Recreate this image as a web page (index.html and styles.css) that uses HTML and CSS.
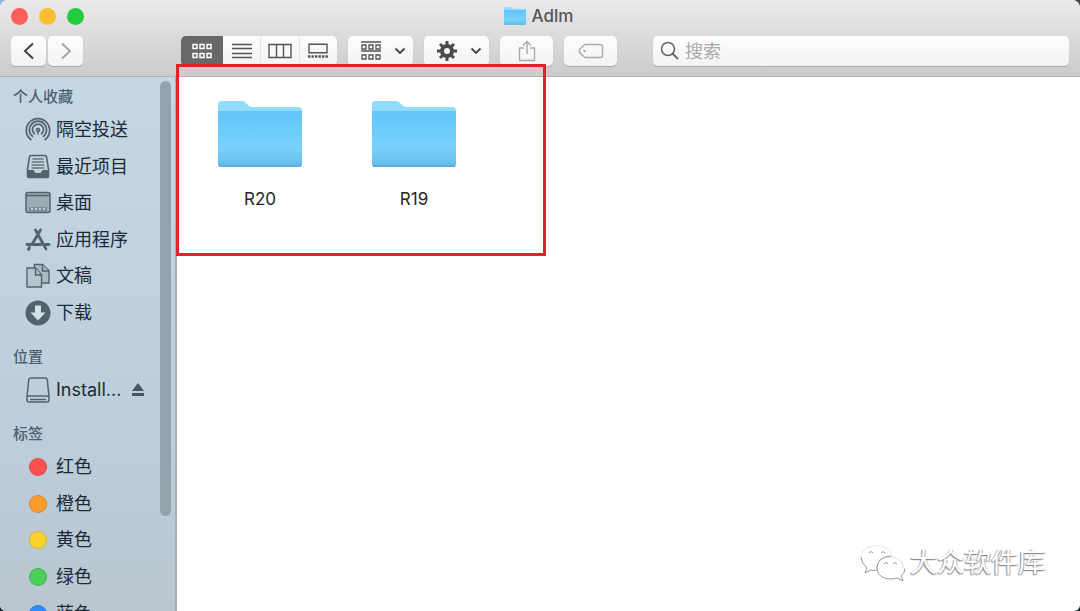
FILE: index.html
```html
<!DOCTYPE html>
<html lang="zh-CN">
<head>
<meta charset="utf-8">
<title>Adlm</title>
<link rel="stylesheet" href="styles.css">
</head>
<body>
<svg class="defs" aria-hidden="true">
  <defs>
    <linearGradient id="front" x1="0" y1="0" x2="0" y2="1">
      <stop offset="0" stop-color="#61c5f8"/>
      <stop offset="0.65" stop-color="#78d2fb"/>
      <stop offset="0.88" stop-color="#6cc5f1"/>
      <stop offset="1" stop-color="#5cb3e2"/>
    </linearGradient>
    <symbol id="folder" viewBox="0 0 84 68">
      <path d="M0 5Q0 1 4 1H24Q27 1 29 4Q31 7 34 7H80Q84 7 84 11V20H0Z" fill="#8fdcfc"/>
      <path d="M0 11H84V64Q84 67 81 67H3Q0 67 0 64Z" fill="url(#front)"/>
      <path d="M1 66.5H83" stroke="#5aa9d2" stroke-width="1"/>
    </symbol>
  </defs>
</svg>
<div class="window">
  <header class="header">
    <div class="titlebar">
      <div class="lights">
        <button class="light close" aria-label="关闭"></button>
        <button class="light minimize" aria-label="最小化"></button>
        <button class="light expand" aria-label="缩放"></button>
      </div>
      <h1 class="title"><svg class="title-icon" viewBox="0 0 84 68" preserveAspectRatio="none" aria-hidden="true"><use href="#folder"/></svg>Adlm</h1>
    </div>
    <div class="toolbar">
      <div class="nav">
        <button class="tool" aria-label="后退"><svg width="12" height="18" viewBox="0 0 12 18"><path d="M10 1.500L2 9l8 7.500" stroke="#444" stroke-width="2"/></svg></button>
        <button class="tool" aria-label="前进"><svg width="12" height="18" viewBox="0 0 12 18"><path d="M2 1.500L10 9l-8 7.500" stroke="#a5a5a5" stroke-width="2"/></svg></button>
      </div>
      <div class="views">
        <button class="view active" aria-label="图标"><svg width="22" height="16" viewBox="0 0 22 16" stroke="#fff" stroke-width="1.500"><path d="M2 1.500h4v4H2zM9 1.500h4v4H9zM16 1.500h4v4h-4zM2 10.500h4v4H2zM9 10.500h4v4H9zM16 10.500h4v4h-4z"/></svg></button>
        <button class="view" aria-label="列表"><svg width="20" height="16" viewBox="0 0 20 16"><path d="M0 1.500h20M0 5.500h20M0 10.500h20M0 14.500h20" stroke="#555" stroke-width="1.300"/></svg></button>
        <button class="view" aria-label="分栏"><svg width="24" height="16" viewBox="0 0 24 16"><path d="M1 1.500h22v13H1zM8.500 1.500v13M15.500 1.500v13" stroke="#555" stroke-width="1.400"/></svg></button>
        <button class="view" aria-label="画廊"><svg width="22" height="16" viewBox="0 0 22 16"><path d="M2 1.200h18v8.500H2z" stroke="#555" stroke-width="1.400"/><path d="M1 13.500h20" stroke="#555" stroke-width="2.600" stroke-dasharray="2.400 1.100"/></svg></button>
      </div>
      <button class="tool wide" aria-label="分组">
        <svg width="22" height="20" viewBox="0 0 22 20"><path d="M1 1h20M1 10h20M2 4h4v4H2zM9 4h4v4H9zM16 4h4v4h-4zM2 14h4v4H2zM9 14h4v4H9zM16 14h4v4h-4z" stroke="#555" stroke-width="1.300"/></svg>
        <svg width="12" height="8" viewBox="0 0 12 8"><path d="M1.500 1.500L6 6l4.500-4.500" stroke="#444" stroke-width="1.800"/></svg>
      </button>
      <button class="tool wide" aria-label="操作">
        <svg width="22" height="22" viewBox="-11 -11 22 22"><g stroke="#4b4b4b" stroke-width="3"><path d="M0-10V-5M0 10V5M-10 0H-5M10 0H5M-7-7L-4-4M7 7L4 4M-7 7L-4 4M7-7L4-4"/><circle r="5" stroke-width="4"/></g></svg>
        <svg width="12" height="8" viewBox="0 0 12 8"><path d="M1.500 1.500L6 6l4.500-4.500" stroke="#444" stroke-width="1.800"/></svg>
      </button>
      <button class="tool single" aria-label="共享"><svg width="18" height="22" viewBox="0 0 18 22"><path d="M6 8H1.500v12.500h15V8H12M9 14V1.500M5 5.500l4-4 4 4" stroke="#aaa" stroke-width="1.400"/></svg></button>
      <button class="tool single" aria-label="标签"><svg width="26" height="16" viewBox="0 0 26 16"><path d="M7 1.500h15.500q2 0 2 2v9q0 2-2 2H7L2 10Q.500 8 2 6Z" stroke="#aaa" stroke-width="1.400"/><circle cx="6.500" cy="8" r="1.200" fill="#aaa"/></svg></button>
      <label class="search">
        <svg width="20" height="20" viewBox="0 0 20 20"><circle cx="8" cy="8" r="6.500" stroke="#666" stroke-width="1.500"/><path d="M12.500 12.500l5.500 5.500" stroke="#666" stroke-width="1.800"/></svg>
        <input type="search" placeholder="搜索" aria-label="搜索">
      </label>
    </div>
  </header>
  <div class="body">
    <nav class="sidebar" aria-label="边栏">
      <section>
        <h2>个人收藏</h2>
        <ul class="favorites">
          <li><a href="#airdrop"><svg class="icon" viewBox="0 0 26 26" stroke="#53636e" stroke-width="1.700"><path d="M6.500 23A11.700 11.700 0 1 1 19.500 23M8 19.800A8.600 8.600 0 1 1 18 19.800M10 17.200A5.500 5.500 0 1 1 16 17.200"/><circle cx="13" cy="13" r="1.500"/><path d="M13 15v3" stroke-width="1.200"/></svg>隔空投送</a></li>
          <li><a href="#recents"><svg class="icon" viewBox="0 0 26 26"><path d="M6 1.500h14q1.300 0 1.500 1.300L23.500 15v7q0 1.500-1.500 1.500H4q-1.500 0-1.500-1.500v-7L4.500 2.800Q4.700 1.500 6 1.500Z" fill="#c3d1db" stroke="#53636e" stroke-width="1.600"/><path d="M2.500 16H8q1 0 1.500 1.500T11 19h4q1 0 1.500-1.500T18 16h5.500v6q0 2-2 2h-17q-2 0-2-2Z" fill="#53636e"/><path d="M7.500 5h11M7 8h12M6.500 11h13M6.500 14h13" stroke="#6a7983" stroke-width="1.300"/></svg>最近项目</a></li>
          <li><a href="#desktop"><svg class="icon" viewBox="0 0 26 26"><rect x="1" y="2.500" width="24" height="20" rx="2" fill="#9dabb5" stroke="#53636e" stroke-width="1.500"/><path d="M1 5.500h24" stroke="#53636e" stroke-width="1.300"/><path d="M4 17h18v5H4z" fill="#7d8c96"/><path d="M6 19h14" stroke="#c3d0d9" stroke-width="2" stroke-dasharray="2 2"/></svg>桌面</a></li>
          <li><a href="#applications"><svg class="icon" viewBox="0 0 26 26" stroke="#53636e" stroke-width="2.800" stroke-linecap="round"><path d="M10.500 3l10.500 19M15.500 3L7.500 16.500M4.500 20.500l-1 2M2 17.500h14M21 17.500h3"/></svg>应用程序</a></li>
          <li><a href="#documents"><svg class="icon" viewBox="0 0 26 26"><g fill="#aab8c2" stroke="#53636e" stroke-width="1.400"><path d="M9.500 1.500h8l6.500 6V20H9.500Z"/><path d="M17.500 1.500V8H24"/><path d="M2 5h8.500l6 6.500V24H2Z" fill="#b7c5cf"/><path d="M10.500 5v7h6"/></g></svg>文稿</a></li>
          <li><a href="#downloads"><svg class="icon" viewBox="0 0 26 26"><circle cx="13" cy="13" r="12.500" fill="#53636e"/><path d="M10 5.500h6v7h4.500L13 20.500 5.500 12.500H10Z" fill="#d3e0e9"/></svg>下载</a></li>
        </ul>
      </section>
      <section>
        <h2>位置</h2>
        <ul>
          <li><a href="#install"><svg class="icon" viewBox="0 0 26 26" stroke="#53636e" stroke-width="1.500"><path d="M6 1h14q2 0 2.300 2L24 19.500V23q0 2-2 2H4q-2 0-2-2V19.500L3.700 3Q4 1 6 1ZM2 20q1-1 2-1h18q1 0 2 1"/><path d="M5 22.500h16"/></svg>Install...</a><button class="eject" aria-label="推出"><svg width="12" height="14" viewBox="0 0 12 14"><path d="M6 0l6 8H0zM0 10h12v3H0z" fill="#465661"/></svg></button></li>
        </ul>
      </section>
      <section>
        <h2>标签</h2>
        <ul class="tags">
          <li><a href="#red"><span class="dot red"></span>红色</a></li>
          <li><a href="#orange"><span class="dot orange"></span>橙色</a></li>
          <li><a href="#yellow"><span class="dot yellow"></span>黄色</a></li>
          <li><a href="#green"><span class="dot green"></span>绿色</a></li>
          <li><a href="#blue"><span class="dot blue"></span>蓝色</a></li>
        </ul>
      </section>
      <div class="scrollbar"></div>
    </nav>
    <main class="files">
      <a class="file" href="#r20"><svg class="file-icon" viewBox="0 0 84 68" aria-hidden="true"><use href="#folder"/></svg>R20</a>
      <a class="file" href="#r19"><svg class="file-icon" viewBox="0 0 84 68" aria-hidden="true"><use href="#folder"/></svg>R19</a>
    </main>
  </div>
  <div class="highlight"></div>
  <div class="watermark">
    <svg width="46" height="40" viewBox="0 0 46 40" stroke-width="1"><path d="M33 13C31-1 3-1 2 14" stroke="#e6e6e6"/><path d="M2 14q0 6 6 11l-2 5 6-3q5 1 7 0" stroke="#999"/><path d="M18 25C18 10 44 10 44 25" stroke="#ddd"/><path d="M32 13Q18 14 18 25C18 34 28 38 38 35l6 3-2-5q4-3 4-8" stroke="#999"/><path d="M10 10q2-3 4 0M22 10q2-3 4 0M25 21q2-3 4 0M34 21q2-3 4 0" stroke="#999"/></svg>
    <span>大众软件库</span>
  </div>
</div>
</body>
</html>
```
FILE: styles.css
```css
* { box-sizing: border-box; }
body {
  margin: 0;
  height: 100vh;
  overflow: hidden;
  background: linear-gradient(90deg, #8db6dc, #444 30%) top / 100% 50% no-repeat, #14242a;
  font-family: Inter, "Noto Sans CJK SC", sans-serif;
  color: #1b2b36;
}
svg { fill: none; flex: none; display: block; }
button { border: 0; padding: 0; margin: 0; font: inherit; background: none; }
a { color: inherit; text-decoration: none; }
h1, h2, ul { margin: 0; padding: 0; list-style: none; }
.defs { position: absolute; width: 0; height: 0; }
.window {
  position: relative;
  display: flex;
  flex-direction: column;
  height: 100%;
  overflow: hidden;
  border-radius: 8px 8px 6px 6px;
  background: #fff;
}
.header {
  flex: none;
  padding-bottom: 10px;
  background: linear-gradient(#eaeaea, #cbcbcb);
  border-bottom: 1px solid #b2b2b2;
}
.titlebar {
  display: grid;
  grid-template-columns: 1fr auto 1fr;
  align-items: center;
  height: 32px;
  padding: 0 14px 0 11px;
}
.lights { display: flex; gap: 11px; }
.light { width: 17px; height: 17px; border-radius: 50%; }
.close { background: #ff5f58; }
.minimize { background: #ffbe2f; }
.expand { background: #20cb3c; }
.title {
  display: flex;
  align-items: center;
  gap: 6px;
  font-size: 17px;
  font-weight: 500;
  color: #555;
}
.title-icon { width: 22px; height: 18px; }
.toolbar {
  display: flex;
  gap: 11px;
  padding: 4px 11px 0;
}
.nav { display: flex; gap: 2px; margin-right: 87px; }
.tool, .views, .search {
  height: 30px;
  border-radius: 5px;
  background: linear-gradient(#fdfdfd, #f3f3f3);
  box-shadow: 0 1px 1px #aaa;
}
.tool {
  display: flex;
  align-items: center;
  justify-content: center;
  width: 35px;
}
.wide { width: 65px; gap: 12px; padding-left: 4px; }
.single { width: 53px; }
.views { display: flex; width: 156px; overflow: hidden; }
.view {
  display: flex;
  flex: 1;
  align-items: center;
  justify-content: center;
  border-right: 1px solid #e4e4e4;
}
.view:last-child { border: 0; }
.active { flex: none; width: 42px; border: 0; background: #686868; }
.search {
  display: flex;
  flex: 1;
  align-items: center;
  gap: 5px;
  margin-left: 25px;
  padding: 0 7px;
}
.search input {
  flex: 1;
  min-width: 0;
  padding: 0;
  border: 0;
  outline: 0;
  background: none;
  font: inherit;
  font-size: 18px;
}
.search input::placeholder { color: #a9a9a9; }
.body { display: flex; flex: 1; min-height: 0; }
.sidebar {
  position: relative;
  display: flex;
  flex: none;
  flex-direction: column;
  gap: 14px;
  width: 177px;
  padding-top: 8px;
  overflow: hidden;
  background: linear-gradient(#c6d7e4, #becfdc 60%, #b9c6d0);
  border-right: 2px solid #a4b0b9;
}
.sidebar h2 {
  padding-left: 13px;
  margin-bottom: 3px;
  font-size: 15px;
  line-height: 24px;
  font-weight: 500;
  color: #4e606d;
}
.sidebar ul { display: grid; grid-auto-rows: 1fr; }
.favorites { min-height: 219px; }
.tags { min-height: 183px; }
.sidebar li {
  display: flex;
  align-items: center;
  justify-content: space-between;
  min-height: 36px;
  padding: 0 31px 0 25px;
}
.sidebar a {
  display: flex;
  align-items: center;
  gap: 5px;
  font-size: 18px;
  line-height: 28px;
}
.icon { width: 26px; height: 26px; }
.dot { width: 18px; height: 18px; margin: 0 4px; border-radius: 50%; border: 1px solid #0002; }
.red { background: #ff524f; }
.orange { background: #fb9d2c; }
.yellow { background: #f9d131; }
.green { background: #4bd05a; }
.blue { background: #2c8cff; }
.scrollbar {
  position: absolute;
  top: 4px;
  right: 4px;
  width: 11px;
  height: 435px;
  border-radius: 6px;
  background: #94a2ab;
}
.files {
  display: flex;
  flex: 1;
  align-items: flex-start;
  padding: 23px 6px;
}
.file {
  display: flex;
  flex-direction: column;
  align-items: center;
  gap: 19px;
  width: 154px;
  font-size: 17px;
  line-height: 24px;
  color: #262626;
}
.file-icon { width: 84px; height: 68px; }
.highlight {
  position: absolute;
  top: 64px;
  left: 176px;
  width: 370px;
  height: 192px;
  border: 3px solid #e6202a;
}
.watermark {
  position: absolute;
  right: 35px;
  bottom: 28px;
  display: flex;
  align-items: center;
  gap: 5px;
  font-size: 27px;
  line-height: 40px;
  color: #fff;
  text-shadow: -1px 1px 1px #888, 1px 1px 1px #aaa;
}
```
